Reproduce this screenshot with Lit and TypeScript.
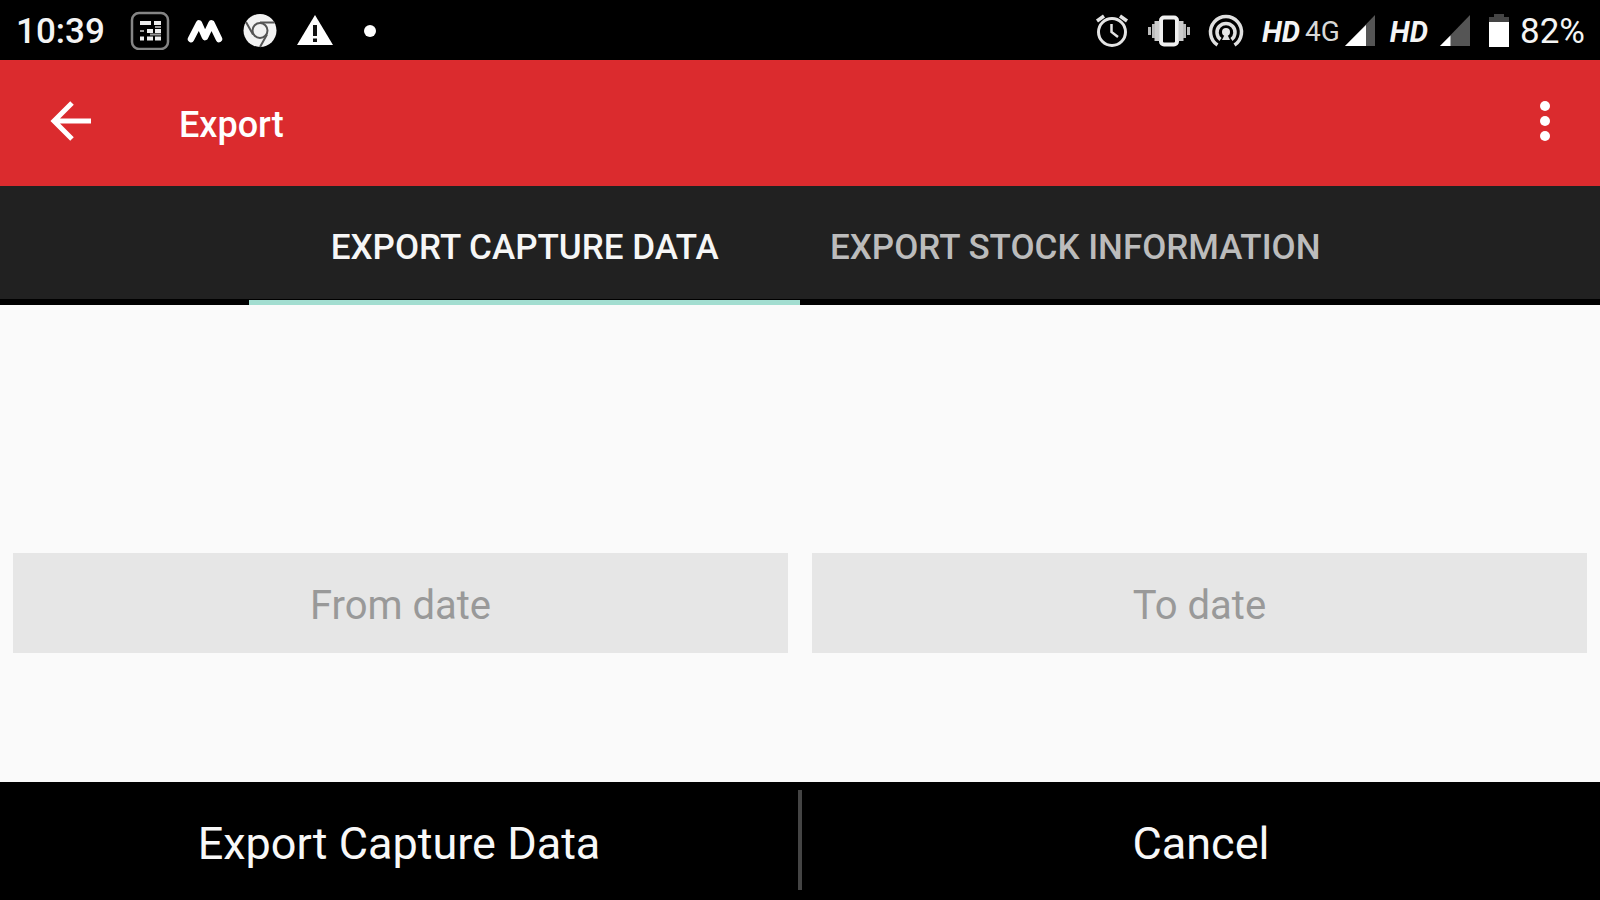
import { LitElement, html, css, svg } from "lit";
import { customElement, state } from "lit/decorators.js";

@customElement("status-bar")
export class StatusBar extends LitElement {
  static styles = css`
    :host {
      display: flex;
      justify-content: space-between;
      align-items: center;
      height: 60px;
      padding: 0 15px 0 16px;
      background: #000;
      color: #f4f4f4;
      font-size: 35px;
      line-height: 40px;
    }
    .group {
      display: flex;
      align-items: center;
      gap: 15px;
    }
    .left {
      gap: 25px;
    }
    .cell {
      display: flex;
      align-items: center;
      gap: 5px;
    }
    .wide {
      gap: 12px;
    }
    svg {
      display: block;
      flex: none;
    }
    span {
      padding-top: 4px;
    }
    .clock {
      font-weight: 500;
    }
    .hd {
      font-size: 29px;
      font-weight: 700;
      font-style: italic;
    }
    .net {
      font-size: 28px;
      color: #d8d8d8;
    }
  `;

  private signal(level: number) {
    const edge = 30 * level;
    return html`<svg width="30" height="32" viewBox="0 0 30 32" aria-hidden="true">
      ${svg`<path d="M30 1V32H0Z" fill="#555"/>
      <path d=${`M0 32H${edge}V${32 - edge}Z`} fill="#fff"/>`}
    </svg>`;
  }

  render() {
    return html`
      <div class="group left">
        <span class="clock">10:39</span>
        <div class="group">
          <svg width="40" height="40" viewBox="0 0 40 40" aria-hidden="true">
            <rect x="2" y="3" width="36" height="36" rx="7" fill="none" stroke="#858585" stroke-width="2.500" />
            <path d="M10 13H21M24 13H31M17 21H23M25 21H31M10 28.500H14M17 28.500H23M25 28.500H31" stroke="#eee" stroke-width="4" />
            <path d="M10 21H14M25 17H31M20 24.500H31" stroke="#999" stroke-width="2" />
          </svg>
          <svg width="40" height="40" viewBox="0 0 40 40" aria-hidden="true">
            <path d="M6 29L14 13.500L20 27L26.500 13.500L34 29" fill="none" stroke="#fff" stroke-width="6.500" stroke-linejoin="round" stroke-linecap="round" />
          </svg>
          <svg width="40" height="40" viewBox="0 0 40 40" aria-hidden="true">
            <circle cx="20" cy="20.500" r="16.500" fill="#f2f2f2" />
            <circle cx="20" cy="20.500" r="7.500" fill="none" stroke="#555" stroke-width="2" />
            <path d="M20 12.500H34.500M13 24.500L6 12M27 24.500L20 37" stroke="#555" stroke-width="2" />
          </svg>
          <svg width="40" height="40" viewBox="0 0 40 40" aria-hidden="true">
            <path d="M20 5L38 35H2Z" fill="#fff" />
            <path d="M20 15V26M20 28.500V32" stroke="#111" stroke-width="4" />
          </svg>
          <svg width="40" height="40" viewBox="0 0 40 40" aria-hidden="true">
            <circle cx="20" cy="21" r="6" fill="#fff" />
          </svg>
        </div>
      </div>
      <div class="group">
        <svg width="42" height="40" viewBox="0 0 42 40" aria-hidden="true">
          <g fill="none" stroke="#e4e4e4">
            <circle cx="21" cy="22" r="13.500" stroke-width="3" />
            <path d="M20.500 14V22L27 27" stroke-width="2.500" />
            <path d="M6 11L13 6M36 11L29 6" stroke-width="3.500" />
          </g>
        </svg>
        <svg width="42" height="40" viewBox="0 0 42 40" aria-hidden="true">
          <rect x="13" y="7.500" width="16" height="27" rx="3" fill="none" stroke="#f0f0f0" stroke-width="4" />
          <path d="M9 11V31M33 11V31" stroke="#ccc" stroke-width="5" />
          <path d="M5.500 14V28M36.500 14V28M1.500 17V25M40.500 17V25" stroke="#bbb" stroke-width="3" />
        </svg>
        <svg width="42" height="40" viewBox="0 0 42 40" aria-hidden="true">
          <g fill="none" stroke="#e0e0e0" stroke-width="3.500">
            <path d="M12.500 35A15.500 15.500 0 1 1 29.500 35" />
            <path d="M15.500 29.500A9 9 0 1 1 26.500 29.500" />
          </g>
          <path d="M21 22L17 30H25Z" fill="#e0e0e0" />
          <circle cx="21" cy="22" r="4" fill="#e8e8e8" />
        </svg>
        <div class="cell">
          <span class="hd">HD</span>
          <span class="net">4G</span>
          ${this.signal(0.7)}
        </div>
        <div class="cell wide">
          <span class="hd">HD</span>
          ${this.signal(0.35)}
        </div>
        <div class="cell">
          <svg width="30" height="40" viewBox="0 0 30 40" aria-hidden="true">
            <path d="M9 4H19V7H24V12H4V7H9Z" fill="#444" />
            <rect x="4" y="12" width="20" height="25" fill="#fff" />
          </svg>
          <span>82%</span>
        </div>
      </div>
    `;
  }
}

@customElement("app-root")
export class AppRoot extends LitElement {
  static styles = css`
    :host {
      display: flex;
      flex-direction: column;
      min-height: 100vh;
      background: #fafafa;
      font-family: Roboto, sans-serif;
    }
    button,
    input {
      box-sizing: border-box;
      font: inherit;
      color: inherit;
      margin: 0;
      padding: 0;
      border: 0;
      border-radius: 0;
      background: none;
    }
    svg {
      display: block;
    }
    .toolbar {
      display: flex;
      align-items: center;
      height: 126px;
      padding: 0 31px 0 47px;
      background: #db2b2e;
      color: #fff;
    }
    .icon {
      width: 48px;
      height: 48px;
      margin-bottom: 4px;
    }
    h1 {
      flex: 1;
      margin: 0;
      padding: 4px 84px 0;
      font-size: 36px;
      line-height: 48px;
      font-weight: 500;
    }
    .strip {
      display: flex;
      justify-content: center;
      height: 119px;
      background: linear-gradient(#000, #000) bottom / 100% 6px no-repeat #212121;
    }
    .tabs {
      display: inline-grid;
      grid-template-columns: 1fr 1fr;
    }
    .tab {
      padding: 10px 30px 0;
      border-bottom: 5px solid transparent;
      font-size: 35px;
      line-height: 48px;
      font-weight: 500;
      white-space: nowrap;
      color: #bcbcbc;
    }
    .tab[aria-selected="true"] {
      color: #f6f6f6;
      border-bottom-color: #a2ddd0;
    }
    main {
      flex: 1;
      padding: 248px 13px 0;
    }
    .dates {
      display: grid;
      grid-template-columns: 1fr 1fr;
      gap: 24px;
    }
    .date {
      min-width: 0;
      height: 100px;
      padding-top: 4px;
      background: #e6e6e6;
      font-size: 40px;
      text-align: center;
    }
    .date::placeholder {
      color: #999;
      opacity: 1;
    }
    footer {
      display: grid;
      grid-template-columns: 1fr 4px 1fr;
      height: 118px;
      background: #000;
      color: #f8f8f8;
      font-size: 45px;
    }
    footer button {
      padding-top: 4px;
    }
    .divider {
      margin: 8px 0 10px;
      background: #444;
    }
  `;

  @state() private active = 0;

  private labels = ["EXPORT CAPTURE DATA", "EXPORT STOCK INFORMATION"];

  render() {
    return html`
      <status-bar></status-bar>
      <header class="toolbar">
        <button class="icon" aria-label="Back">
          <svg width="48" height="48" viewBox="0 0 48 48">
            <path d="M25 6L7 24L25 42M7 24H44" fill="none" stroke="#fff" stroke-width="5" />
          </svg>
        </button>
        <h1>Export</h1>
        <button class="icon" aria-label="More options">
          <svg width="48" height="48" viewBox="0 0 48 48">
            <g fill="#fff">
              <circle cx="24" cy="9" r="5" />
              <circle cx="24" cy="24" r="5" />
              <circle cx="24" cy="39" r="5" />
            </g>
          </svg>
        </button>
      </header>
      <nav class="strip">
        <div class="tabs" role="tablist">
          ${this.labels.map(
            (label, i) => html`<button
              class="tab"
              role="tab"
              aria-selected=${i === this.active ? "true" : "false"}
              @click=${() => (this.active = i)}
            >${label}</button>`
          )}
        </div>
      </nav>
      <main>
        <div class="dates">
          <input class="date" type="text" placeholder="From date" aria-label="From date" />
          <input class="date" type="text" placeholder="To date" aria-label="To date" />
        </div>
      </main>
      <footer>
        <button>Export Capture Data</button>
        <span class="divider"></span>
        <button>Cancel</button>
      </footer>
    `;
  }
}
